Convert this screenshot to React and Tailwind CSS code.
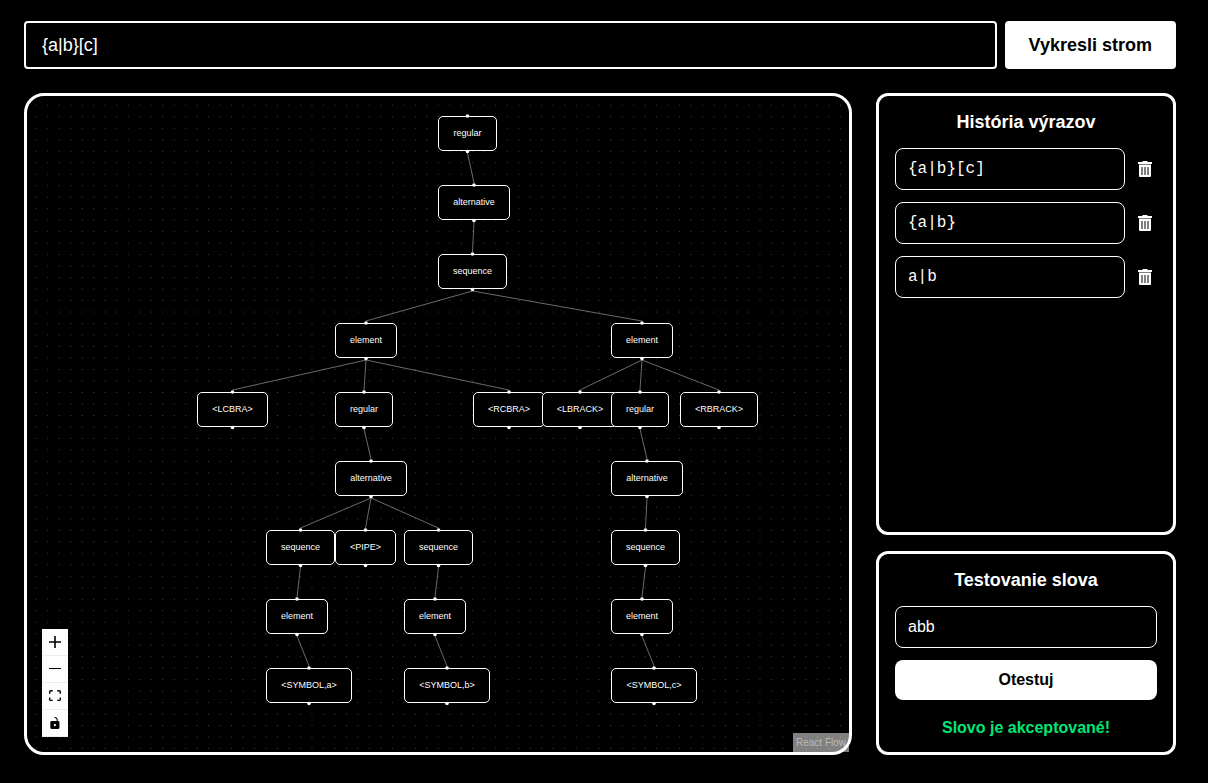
const COLUMN = [170, 239, 308, 377, 446, 515, 584, 653];
const ROW = [20, 89, 158, 227, 296, 365, 434, 503, 572];
const NODE_HEIGHT = 35;

const node = (label, x, y, w, parent) => ({ label, x, y, w, parent });

const nodes = [
  node('regular', 411, ROW[0], 59, null),
  node('alternative', 411, ROW[1], 72, 0),
  node('sequence', 411, ROW[2], 69, 1),
  node('element', COLUMN[2], ROW[3], 62, 2),
  node('<LCBRA>', COLUMN[0], ROW[4], 71, 3),
  node('regular', COLUMN[2], ROW[4], 58, 3),
  node('alternative', COLUMN[2], ROW[5], 72, 5),
  node('sequence', COLUMN[1], ROW[6], 69, 6),
  node('element', COLUMN[1], ROW[7], 62, 7),
  node('<SYMBOL,a>', COLUMN[1], ROW[8], 86, 8),
  node('<PIPE>', COLUMN[2], ROW[6], 61, 6),
  node('sequence', COLUMN[3], ROW[6], 69, 6),
  node('element', COLUMN[3], ROW[7], 62, 11),
  node('<SYMBOL,b>', COLUMN[3], ROW[8], 86, 12),
  node('<RCBRA>', COLUMN[4], ROW[4], 72, 3),
  node('element', COLUMN[6], ROW[3], 62, 2),
  node('<LBRACK>', COLUMN[5], ROW[4], 76, 15),
  node('regular', COLUMN[6], ROW[4], 58, 15),
  node('alternative', COLUMN[6], ROW[5], 72, 17),
  node('sequence', COLUMN[6], ROW[6], 69, 18),
  node('element', COLUMN[6], ROW[7], 62, 19),
  node('<SYMBOL,c>', COLUMN[6], ROW[8], 86, 20),
  node('<RBRACK>', COLUMN[7], ROW[4], 78, 15),
];

const center = (n) => n.x + n.w / 2;

function Graph() {
  return (
    <>
      <svg className="absolute inset-0 h-full w-full" aria-hidden="true">
        <defs>
          <pattern id="dots" x="8.8" y="8.8" width="11.487" height="11.487" patternUnits="userSpaceOnUse">
            <circle cx="0.5" cy="0.5" r="0.42" fill="#91919a" />
          </pattern>
        </defs>
        <rect width="100%" height="100%" fill="url(#dots)" />
        {nodes.map((n, i) => {
          if (n.parent === null) return null;
          const p = nodes[n.parent];
          return (
            <line
              key={i}
              x1={center(p)}
              y1={p.y + NODE_HEIGHT + 2}
              x2={center(n)}
              y2={n.y - 2}
              stroke="#b1b1b7"
              strokeWidth="0.6"
            />
          );
        })}
      </svg>
      {nodes.map((n, i) => (
        <div
          key={i}
          className="absolute flex h-[35px] items-center justify-center rounded-[5px] border border-white bg-black pb-[2px] text-[9px] leading-3 whitespace-nowrap"
          style={{ left: n.x, top: n.y, width: n.w }}
        >
          {n.label}
        </div>
      ))}
      <svg className="pointer-events-none absolute inset-0 h-full w-full" aria-hidden="true">
        {nodes.map((n, i) => (
          <g key={i} fill="#fff">
            <circle cx={center(n)} cy={n.y} r="1.8" />
            <circle cx={center(n)} cy={n.y + NODE_HEIGHT + 0.5} r="1.8" />
          </g>
        ))}
      </svg>
    </>
  );
}

const controls = [
  {
    label: 'zoom in',
    viewBox: '0 0 32 32',
    d: 'M32 18.133H18.133V32h-4.266V18.133H0v-4.266h13.867V0h4.266v13.867H32z',
  },
  { label: 'zoom out', viewBox: '0 0 32 5', d: 'M0 0h32v2.800H0z' },
  {
    label: 'fit view',
    viewBox: '0 0 32 30',
    d: 'M3.692 4.63c0-.53.4-.938.939-.938h5.215V0H4.708C2.13 0 0 2.054 0 4.63v5.216h3.692V4.631zM27.354 0h-5.2v3.692h5.17c.53 0 .984.4.984.939v5.215H32V4.631A4.624 4.624 0 0027.354 0zm.954 24.83c0 .532-.4.94-.939.94h-5.215v3.768h5.215c2.577 0 4.631-2.13 4.631-4.707v-5.139h-3.692v5.139zm-23.677.94c-.531 0-.939-.4-.939-.94v-5.138H0v5.139c0 2.577 2.13 4.707 4.708 4.707h5.138V25.77H4.631z',
  },
  {
    label: 'toggle interactivity',
    viewBox: '0 0 25 32',
    d: 'M21.333 10.667H19.81V7.619C19.81 3.429 16.38 0 12.19 0c-4.114 1.828-1.37 2.133.305 2.438 1.676.305 4.42 2.59 4.42 5.181v3.048H3.047A3.056 3.056 0 000 13.714v15.238A3.056 3.056 0 003.048 32h18.285a3.056 3.056 0 003.048-3.048V13.714a3.056 3.056 0 00-3.048-3.047zM12.19 24.533a3.056 3.056 0 01-3.047-3.047 3.056 3.056 0 013.047-3.048 3.056 3.056 0 013.048 3.048 3.056 3.056 0 01-3.048 3.047z',
  },
];

function Controls() {
  return (
    <div className="absolute bottom-[15px] left-[15px] flex flex-col">
      {controls.map((c) => (
        <button
          key={c.label}
          type="button"
          aria-label={c.label}
          className="flex h-[27px] w-[26px] items-center justify-center border-b border-[#eee] bg-[#fefefe] text-black"
        >
          <svg viewBox={c.viewBox} className="max-h-3 w-full max-w-3" fill="currentColor" aria-hidden="true">
            <path d={c.d} />
          </svg>
        </button>
      ))}
    </div>
  );
}

function TrashIcon() {
  return (
    <svg width="14" height="16" viewBox="0 0 14 16" fill="none" aria-hidden="true">
      <path fill="#fff" d="M5 0h4l1 1h4v2H0V1h4zM1 3.600h12v11.400a1 1 0 0 1-1 1H2a1 1 0 0 1-1-1z" />
      <path stroke="#808080" strokeWidth="2" d="M4 6v8M7 6v8M10 6v8" />
    </svg>
  );
}

const history = ['{a|b}[c]', '{a|b}', 'a|b'];

export default function App() {
  return (
    <div className="flex min-h-screen flex-col gap-6 bg-black pt-[21px] pr-8 pb-7 pl-6 font-['Liberation_Sans',Arial,sans-serif] text-white">
      <form className="flex gap-2" onSubmit={(e) => e.preventDefault()}>
        <input
          aria-label="Regulárny výraz"
          defaultValue="{a|b}[c]"
          className="h-12 min-w-0 flex-1 rounded-[4px] border-2 border-white bg-black px-4 text-lg outline-none"
        />
        <button type="submit" className="h-12 rounded-[4px] bg-white px-6 text-lg font-bold text-black">
          Vykresli strom
        </button>
      </form>

      <div className="flex flex-1 gap-6">
        <main className="relative min-w-0 flex-1 rounded-[20px] border-3 border-white">
          <Graph />
          <Controls />
          <a
            href="https://reactflow.dev"
            className="absolute right-0 bottom-0 bg-white/50 px-[3px] py-[2px] text-[10px] leading-[15px] text-[#bbb]"
          >
            React Flow
          </a>
        </main>

        <aside className="flex w-[300px] shrink-0 flex-col gap-4">
          <section className="flex flex-1 flex-col gap-3 rounded-xl border-3 border-white px-4 pt-3">
            <h2 className="text-center text-lg leading-7 font-bold">História výrazov</h2>
            <ul className="flex flex-col gap-3">
              {history.map((item) => (
                <li key={item} className="flex items-center gap-3">
                  <button
                    type="button"
                    className="h-[42px] flex-1 rounded-lg border border-white px-3 text-left font-['Liberation_Mono',monospace] text-base"
                  >
                    {item}
                  </button>
                  <button type="button" aria-label={`Vymazať ${item}`} className="flex w-5 justify-start pl-px">
                    <TrashIcon />
                  </button>
                </li>
              ))}
            </ul>
          </section>

          <section className="flex flex-col gap-3 rounded-xl border-3 border-white px-4 pt-3 pb-3">
            <h2 className="text-center text-lg leading-7 font-bold">Testovanie slova</h2>
            <input
              aria-label="Slovo"
              defaultValue="abb"
              className="h-[42px] w-full rounded-lg border border-white bg-black px-3 text-base outline-none"
            />
            <button type="button" className="h-10 rounded-lg bg-white text-base font-bold text-black">
              Otestuj
            </button>
            <p className="pt-1 text-center text-base font-bold text-[#00e676]">Slovo je akceptované!</p>
          </section>
        </aside>
      </div>
    </div>
  );
}
